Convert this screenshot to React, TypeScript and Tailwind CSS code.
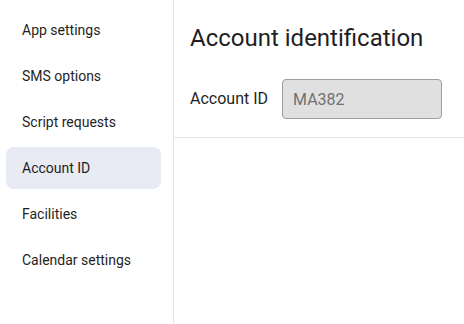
const navItems = [
  "App settings",
  "SMS options",
  "Script requests",
  "Account ID",
  "Facilities",
  "Calendar settings",
];

export default function App() {
  const active = "Account ID";

  return (
    <div
      className="flex h-[324px] w-[464px] overflow-hidden bg-white text-[#1f1f1f]"
      style={{ fontFamily: "Roboto, 'Noto Sans', sans-serif" }}
    >
      {/* Sidebar */}
      <nav className="flex w-[174px] shrink-0 flex-col gap-1 border-r border-[#e3e3e3] pt-[9px] pr-3 pl-[6px]">
        {navItems.map((item) => (
          <div
            key={item}
            className={`flex h-[42px] items-center rounded-lg pl-4 text-sm ${
              item === active ? "bg-[#e8ebf3]" : ""
            }`}
          >
            {item}
          </div>
        ))}
      </nav>

      {/* Content */}
      <main className="flex-1">
        <div className="border-b border-[#e4e4f0] pt-[22px] pb-[18px] pl-4">
          <h1 className="mb-[25px] text-2xl leading-8 font-normal">Account identification</h1>
          <div className="flex items-center gap-[14px]">
            <label className="text-base">Account ID</label>
            <input
              type="text"
              value="MA382"
              disabled
              readOnly
              className="h-10 w-[160px] rounded border border-[#9e9e9e] bg-[#e0e0e0] px-[10px] text-base text-[#707070]"
            />
          </div>
        </div>
      </main>
    </div>
  );
}
